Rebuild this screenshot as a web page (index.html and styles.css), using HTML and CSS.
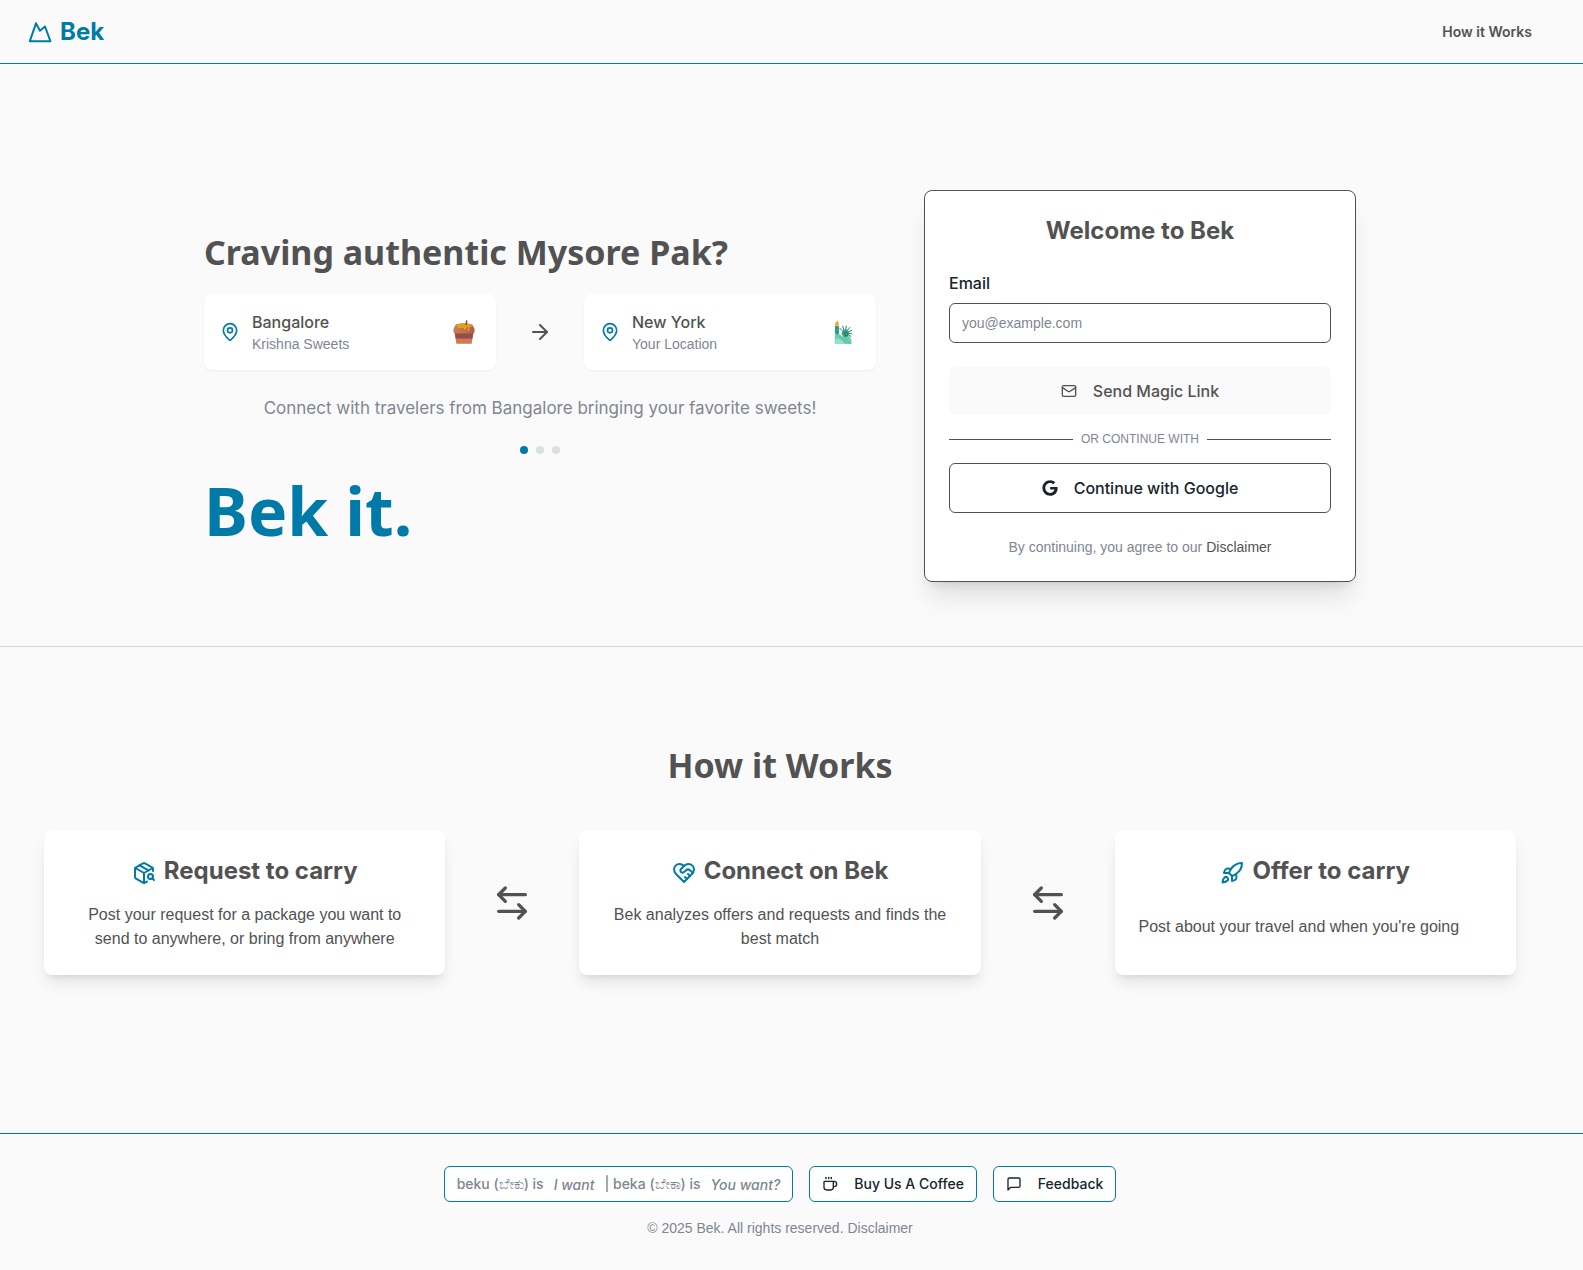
FILE: index.html
```html
<!DOCTYPE html>
<html lang="en">
<head>
    <meta charset="UTF-8">
    <meta name="viewport" content="width=device-width, initial-scale=1.0">
    <title>Bek</title>
    <link rel="stylesheet" href="styles.css">
</head>
<body>
    <header class="header">
        <a class="logo" href="#">
            <svg class="icon-24" viewBox="0 0 24 24"><path d="M1.8 21.2 8 3.3l4 7.4 5-4.2 5.4 14.7z"/></svg>
            Bek
        </a>
        <nav>
            <a class="nav-link" href="#how-it-works">How it Works</a>
        </nav>
    </header>

    <main>
        <section class="hero">
            <div class="hero-grid">
                <div class="pitch">
                    <h1>Craving authentic Mysore Pak?</h1>
                    <div class="route">
                        <div class="place">
                            <svg class="pin" viewBox="0 0 24 24"><path d="M20 10c0 4.993-5.539 10.193-7.399 11.799a1 1 0 0 1-1.202 0C9.539 20.193 4 14.993 4 10a8 8 0 0 1 16 0"/><circle cx="12" cy="10" r="3"/></svg>
                            <div class="place-text">
                                <div class="city">Bangalore</div>
                                <div class="spot">Krishna Sweets</div>
                            </div>
                            <svg class="emoji" viewBox="0 0 24 24">
                                <defs>
                                    <linearGradient id="clay" x1="0" y1="0" x2="1" y2="0">
                                        <stop offset="0" stop-color="#c98257"/>
                                        <stop offset=".5" stop-color="#c46f4e"/>
                                        <stop offset="1" stop-color="#a85f4c"/>
                                    </linearGradient>
                                </defs>
                                <path d="M4.500 5.500C1.800 6.500 1 9 1.500 11.500c.3 1.500 1.200 2 1.500 3l1.500 9.100h15L21 14.500c.3-1 1.200-1.500 1.500-3 .5-2.500-.3-5-3-6z" fill="url(#clay)"/>
                                <path d="M2.800 13.500h18.400l-.9 5.200H3.700z" fill="#964d45"/>
                                <path d="M3.700 18.700h16.600l-.8 4.900h-15z" fill="#cf7c56"/>
                                <ellipse cx="12" cy="5.800" rx="9" ry="2.600" fill="#b56a48"/>
                                <path d="M4.500 5.200c2-1.800 13-1.800 15 0 .8 1.200-.6 1.800-1.600 1.700-.6 1.800-2 1.600-2.300.1-.8 0-1 .3-1.300 1.600-.5 1.500-2.200 1.300-2.500-.2-.8-1.300-1.600-.3-2.700-.1-2 .2-5.400-.9-4.600-3.100z" fill="#e0a01c"/>
                                <circle cx="16.500" cy="9.600" r="1" fill="#e9b13b"/>
                                <path d="M14.200 4.500 14.700 1" stroke="#77503f" stroke-width="1.500" stroke-linecap="round"/>
                            </svg>
                        </div>
                        <svg class="arrow" viewBox="0 0 24 24"><path d="M5 12h14"/><path d="m12 5 7 7-7 7"/></svg>
                        <div class="place">
                            <svg class="pin" viewBox="0 0 24 24"><path d="M20 10c0 4.993-5.539 10.193-7.399 11.799a1 1 0 0 1-1.202 0C9.539 20.193 4 14.993 4 10a8 8 0 0 1 16 0"/><circle cx="12" cy="10" r="3"/></svg>
                            <div class="place-text">
                                <div class="city">New York</div>
                                <div class="spot">Your Location</div>
                            </div>
                            <svg class="emoji" viewBox="0 0 24 24">
                                <path d="M2.800 24V12l.2-6.200h4L7.200 14l3.300 2.500 4.500-1c3 .5 4.500 2.500 4.800 8.500z" fill="#6fcdb1"/>
                                <path d="M3 5.800h3.800L7 13l-1.600 2-2.300-2z" fill="#379a85"/>
                                <path d="M9.500 13.500c.5-3 2.500-4.500 4.500-4.200 2.300.3 3.300 2.500 2.900 4.700-.4 2.200-1.500 3.300-3.200 3.300-2.200 0-2.900-1.300-4.200-3.800z" fill="#3a9b87"/>
                                <path d="M10 10.500 7.900 8.300M11.600 9.500l-.8-3.400M13.800 9.200l.5-3.200M15.800 10l2-2.500M16.800 11.600l2.800-1.100M17 13.500l2.500.2M16.700 15.200l2.200 1.200" stroke="#2c8475" stroke-width="1" stroke-linecap="round"/>
                                <path d="M2.800 19c4-1 8 1 10 5h-10z" fill="#93e2c7"/>
                                <path d="M7.500 16.500c2.500 1.500 4.500 3.500 5.500 6M12.500 18c2 1 3.500 2.500 4 4.500" stroke="#4fb199" stroke-width=".8" fill="none"/>
                                <path d="M12.500 13h1.200M15.300 13.200h.7M13.500 15.400h1.600" stroke="#165f55" stroke-width=".7"/>
                                <path d="M3 5.200C2.500 3 4.400 2.500 5.400.3c.5 1.600 1.800 2.500 1.400 4.900z" fill="#f3a62b"/>
                            </svg>
                        </div>
                    </div>
                    <p class="pitch-text">Connect with travelers from Bangalore bringing your favorite sweets!</p>
                    <div class="dots">
                        <span class="dot active"></span>
                        <span class="dot"></span>
                        <span class="dot"></span>
                    </div>
                    <p class="slogan">Bek it.</p>
                </div>

                <form class="login">
                    <h2>Welcome to Bek</h2>
                    <label for="email">Email</label>
                    <input type="email" id="email" name="email" placeholder="you@example.com" required>
                    <button class="btn btn-magic" type="submit">
                        <svg class="icon-16" viewBox="0 0 24 24"><rect x="2" y="4" width="20" height="16" rx="2"/><path d="m22 7-8.970 5.700a1.940 1.940 0 0 1-2.060 0L2 7"/></svg>
                        Send Magic Link
                    </button>
                    <div class="divider">OR CONTINUE WITH</div>
                    <button class="btn btn-google" type="button">
                        <svg class="google" viewBox="0 0 488 512"><path d="M488 261.800C488 403.300 391.100 504 248 504 110.800 504 0 393.200 0 256S110.800 8 248 8c66.800 0 123 24.500 166.300 64.900l-67.500 64.900C258.500 52.600 94.300 116.600 94.300 256c0 86.500 69.100 156.600 153.700 156.600 98.200 0 135-70.400 140.800-106.900H248v-85.300h236.100c2.300 12.700 3.900 24.900 3.900 41.400z"/></svg>
                        Continue with Google
                    </button>
                    <p class="terms">By continuing, you agree to our <a href="#">Disclaimer</a></p>
                </form>
            </div>
        </section>

        <section class="how" id="how-it-works">
            <h2>How it Works</h2>
            <div class="steps">
                <div class="step">
                    <h3>
                        <svg class="icon-24" viewBox="0 0 24 24"><path d="M21 10V8a2 2 0 0 0-1-1.730l-7-4a2 2 0 0 0-2 0l-7 4A2 2 0 0 0 3 8v8a2 2 0 0 0 1 1.730l7 4a2 2 0 0 0 2 0l2-1.140"/><path d="m7.500 4.270 9 5.150"/><path d="M3.290 7 12 12l8.710-5"/><path d="M12 22V12"/><circle cx="18.500" cy="15.500" r="2.500"/><path d="M20.270 17.270 22 19"/></svg>
                        Request to carry
                    </h3>
                    <div class="step-body centered">
                        <p>Post your request for a package you want to<br>send to anywhere, or bring from anywhere</p>
                    </div>
                </div>
                <svg class="swap" viewBox="0 0 24 24"><path d="M8 3 4 7l4 4"/><path d="M4 7h16"/><path d="m16 21 4-4-4-4"/><path d="M20 17H4"/></svg>
                <div class="step">
                    <h3>
                        <svg class="icon-24" viewBox="0 0 24 24"><path d="M19 14c1.490-1.460 3-3.210 3-5.500A5.500 5.500 0 0 0 16.500 3c-1.760 0-3 .5-4.500 2-1.500-1.500-2.740-2-4.500-2A5.500 5.500 0 0 0 2 8.500c0 2.300 1.500 4.050 3 5.500l7 7Z"/><path d="M12 5 9.040 7.960a2.170 2.170 0 0 0 0 3.080c.82.82 2.130.85 3 .07l2.070-1.900a2.820 2.820 0 0 1 3.790 0l2.960 2.660"/><path d="m18 15-2-2"/><path d="m15 18-2-2"/></svg>
                        Connect on Bek
                    </h3>
                    <div class="step-body centered">
                        <p>Bek analyzes offers and requests and finds the best match</p>
                    </div>
                </div>
                <svg class="swap" viewBox="0 0 24 24"><path d="M8 3 4 7l4 4"/><path d="M4 7h16"/><path d="m16 21 4-4-4-4"/><path d="M20 17H4"/></svg>
                <div class="step">
                    <h3>
                        <svg class="icon-24" viewBox="0 0 24 24"><path d="M4.500 16.500c-1.500 1.260-2 5-2 5s3.740-.5 5-2c.71-.84.7-2.130-.09-2.910a2.180 2.180 0 0 0-2.910-.09z"/><path d="m12 15-3-3a22 22 0 0 1 2-3.950A12.880 12.880 0 0 1 22 2c0 2.720-.78 7.500-6 11a22.350 22.350 0 0 1-4 2z"/><path d="M9 12H4s.55-3.030 2-4c1.620-1.080 5 0 5 0"/><path d="M12 15v5s3.030-.55 4-2c1.080-1.620 0-5 0-5"/></svg>
                        Offer to carry
                    </h3>
                    <div class="step-body">
                        <p>Post about your travel and when you're going</p>
                    </div>
                </div>
            </div>
        </section>
    </main>

    <footer class="footer">
        <div class="footer-row">
            <button class="chip meaning" type="button">
                <span>beku (ಬೇಕು) is</span>
                <em>I want</em>
                <span>| beka (ಬೇಕಾ) is</span>
                <em>You want?</em>
            </button>
            <a class="chip" href="#">
                <svg class="icon-16" viewBox="0 0 24 24"><path d="M10 2v2"/><path d="M14 2v2"/><path d="M16 8a1 1 0 0 1 1 1v8a4 4 0 0 1-4 4H7a4 4 0 0 1-4-4V9a1 1 0 0 1 1-1h14a4 4 0 1 1 0 8h-1"/><path d="M6 2v2"/></svg>
                Buy Us A Coffee
            </a>
            <a class="chip" href="#">
                <svg class="icon-16" viewBox="0 0 24 24"><path d="M21 15a2 2 0 0 1-2 2H7l-4 4V5a2 2 0 0 1 2-2h14a2 2 0 0 1 2 2z"/></svg>
                Feedback
            </a>
        </div>
        <p class="copyright">© 2025 Bek. All rights reserved. <a href="#">Disclaimer</a></p>
    </footer>
</body>
</html>
```
FILE: styles.css
```css
* {
    box-sizing: border-box;
}
body {
    font-family: "Liberation Sans", Arial, sans-serif;
    font-size: 16px;
    line-height: 24px;
    background-color: #fafafa;
    color: #525252;
    margin: 0;
}
h1, h2, h3, p {
    margin: 0;
}
a {
    color: inherit;
    text-decoration: none;
}
svg {
    flex-shrink: 0;
    fill: none;
    stroke: currentColor;
    stroke-width: 2;
    stroke-linecap: round;
    stroke-linejoin: round;
}
.icon-16 {
    width: 16px;
    height: 16px;
}
.icon-24 {
    width: 24px;
    height: 24px;
}

.hero, .how, .footer {
    padding-right: 23px;
}

.header {
    display: flex;
    justify-content: space-between;
    align-items: center;
    height: 64px;
    padding-left: 28px;
    padding-right: 51px;
    border-bottom: 1px solid #007aa8;
}
.logo, .nav-link, .city, .pitch-text, .login h2, .login label, .btn, .step h3, .chip {
    font-family: Inter, "Liberation Sans", sans-serif;
}
.logo {
    display: flex;
    align-items: center;
    gap: 8px;
    font-size: 24px;
    font-weight: bold;
    color: #007aa8;
}
.nav-link {
    font-size: 14px;
    font-weight: 600;
}

/* Hero */
.hero {
    padding-top: 126px;
    padding-bottom: 64px;
    border-bottom: 1px solid #d1d5db;
}
.hero-grid {
    display: grid;
    grid-template-columns: 1fr 432px;
    gap: 48px;
    align-items: center;
    max-width: 1152px;
    margin: 0 auto;
}
.pitch {
    padding-top: 6px;
}
.pitch h1, .how h2 {
    font-family: "Noto Sans", "Open Sans", sans-serif;
    font-size: 34px;
    line-height: 40px;
    font-weight: bold;
}
.route {
    display: flex;
    align-items: center;
    justify-content: space-between;
    margin-top: 22px;
}
.place {
    display: flex;
    align-items: center;
    gap: 12px;
    width: 292px;
    padding: 16px;
    background-color: white;
    border-radius: 8px;
    box-shadow: 0 1px 2px rgba(0, 0, 0, 0.05);
}
.pin {
    width: 20px;
    height: 20px;
    color: #007aa8;
}
.place-text {
    flex: 1;
}
.city {
    font-weight: 500;
}
.spot {
    font-size: 14px;
    line-height: 20px;
    color: #808691;
}
.emoji {
    width: 24px;
    height: 24px;
    margin-right: 4px;
    stroke: none;
}
.arrow {
    width: 24px;
    height: 24px;
}
.pitch-text {
    margin-top: 24px;
    font-size: 17px;
    line-height: 28px;
    text-align: center;
    color: #808691;
}
.dots {
    display: flex;
    justify-content: center;
    gap: 8px;
    margin-top: 24px;
}
.dot {
    width: 8px;
    height: 8px;
    border-radius: 50%;
    background-color: #dadfe3;
}
.dot.active {
    background-color: #007aa8;
}
.slogan {
    margin-top: 20px;
    font-family: "Noto Sans", "Open Sans", sans-serif;
    font-size: 66px;
    line-height: 72px;
    font-weight: bold;
    color: #007aa8;
}

/* Login form */
.login {
    display: flex;
    flex-direction: column;
    padding: 24px;
    background-color: white;
    border: 1px solid #525252;
    border-radius: 8px;
    box-shadow: 0 20px 25px -5px rgba(0, 0, 0, 0.1), 0 8px 10px -6px rgba(0, 0, 0, 0.1);
}
.login h2 {
    margin-bottom: 24px;
    font-size: 24px;
    line-height: 32px;
    text-align: center;
}
.login label {
    margin-bottom: 8px;
    font-weight: 500;
    color: #18242b;
}
.login input {
    height: 40px;
    padding: 8px 12px;
    border: 1px solid #525252;
    border-radius: 6px;
    background-color: white;
    font-family: inherit;
    font-size: 14px;
}
.login input::placeholder {
    color: #808691;
}
.btn {
    display: flex;
    align-items: center;
    justify-content: center;
    gap: 16px;
    border-radius: 6px;
    font-size: 16px;
    line-height: 24px;
    font-weight: 500;
    cursor: pointer;
}
.btn-magic {
    margin-top: 24px;
    padding: 12px;
    border: none;
    background-color: #fafafa;
    color: #525252;
}
.btn-google {
    padding: 12px;
    border: 1px solid #525252;
    background-color: white;
    color: #18242b;
}
.google {
    width: 16px;
    height: 16px;
    fill: currentColor;
    stroke: none;
}
.divider {
    display: flex;
    align-items: center;
    gap: 8px;
    margin: 16px 0;
    font-size: 12px;
    line-height: 16px;
    color: #808691;
}
.divider::before, .divider::after {
    content: "";
    flex: 1;
    height: 1px;
    background-color: #525252;
}
.terms {
    margin-top: 24px;
    font-size: 14px;
    line-height: 20px;
    text-align: center;
    color: #808691;
}
.terms a {
    color: #525252;
}

/* How it works */
.how {
    padding-top: 98px;
    padding-bottom: 158px;
}
.how h2 {
    text-align: center;
}
.steps {
    display: grid;
    grid-template-columns: 3fr 1fr 3fr 1fr 3fr;
    align-items: center;
    max-width: 1472px;
    margin: 46px auto 0;
}
.step {
    display: flex;
    flex-direction: column;
    align-self: stretch;
    padding: 24px;
    background-color: white;
    border-radius: 8px;
    box-shadow: 0 10px 15px -3px rgba(0, 0, 0, 0.1), 0 4px 6px -4px rgba(0, 0, 0, 0.1);
}
.step h3 {
    display: flex;
    align-items: center;
    justify-content: center;
    gap: 8px;
    margin-bottom: 16px;
    font-size: 24px;
    line-height: 32px;
}
.step h3 svg {
    margin-top: 4px;
    color: #007aa8;
}
.step-body {
    display: flex;
    flex: 1;
    align-items: center;
}
.step-body.centered {
    justify-content: center;
    text-align: center;
}
.swap {
    width: 40px;
    height: 40px;
    justify-self: center;
}

/* Footer */
.footer {
    padding-top: 32px;
    padding-bottom: 32px;
    border-top: 1px solid #007aa8;
}
.footer-row {
    display: flex;
    justify-content: center;
    gap: 16px;
}
.chip {
    display: flex;
    align-items: center;
    gap: 16px;
    height: 36px;
    padding: 0 12px;
    border: 1px solid #007aa8;
    border-radius: 6px;
    background-color: white;
    font-size: 14px;
    font-weight: 500;
    color: #18242b;
}
.meaning {
    gap: 10px;
    color: #808691;
}
.copyright {
    margin-top: 16px;
    font-size: 14px;
    line-height: 20px;
    text-align: center;
    color: #808691;
}
```
